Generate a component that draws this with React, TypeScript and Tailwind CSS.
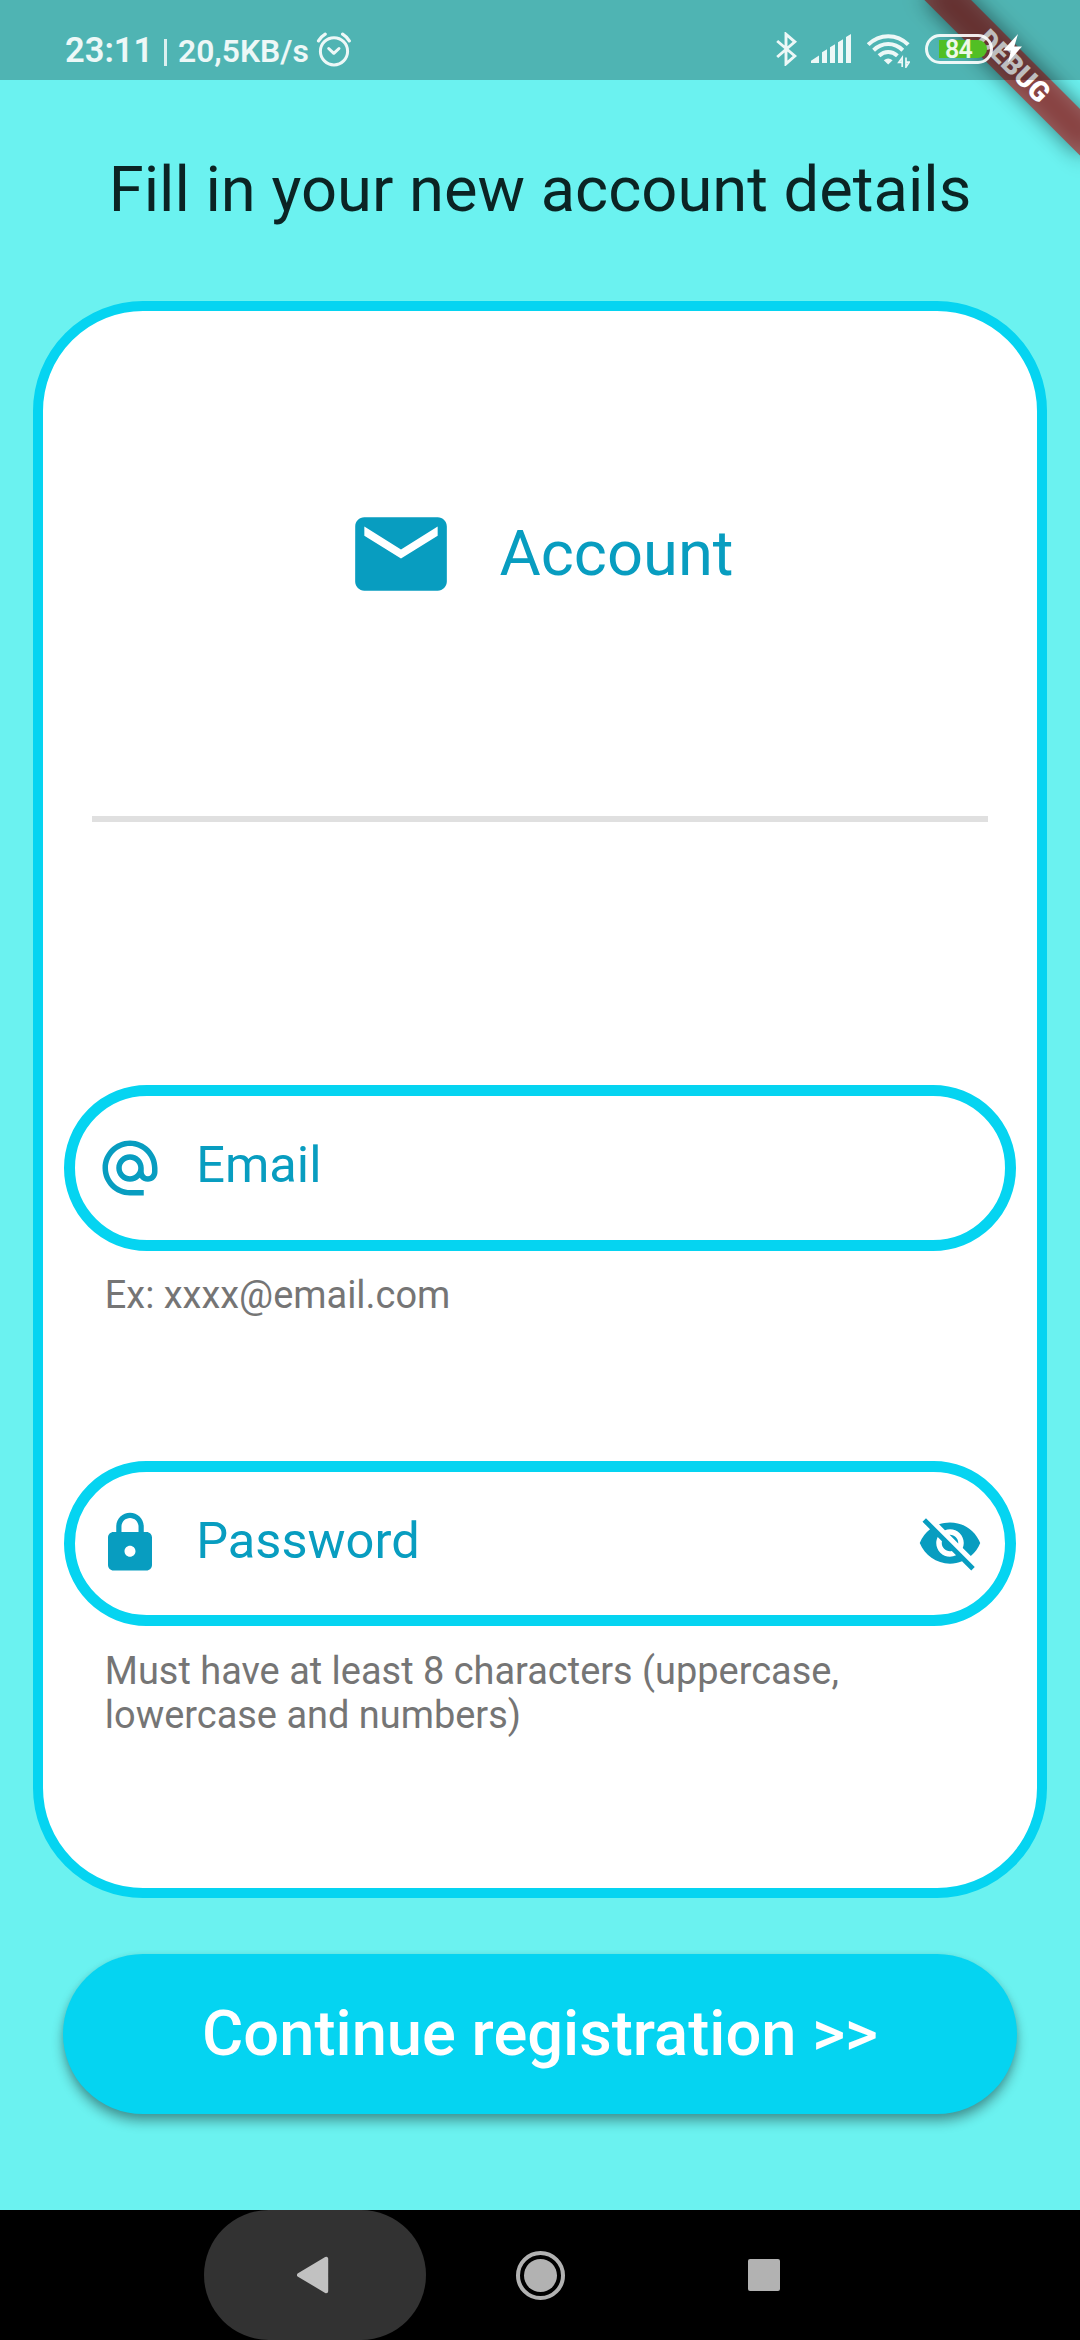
import type { ReactNode } from "react";
import {
  MdAlternateEmail,
  MdEmail,
  MdLock,
  MdVisibilityOff,
} from "react-icons/md";

function AlarmIcon() {
  return (
    <svg width="36" height="36" viewBox="0 0 36 36" fill="none" stroke="currentColor" strokeLinecap="round" strokeLinejoin="round">
      <circle cx="18" cy="19.3" r="13.6" strokeWidth="3" />
      <path d="M2.5 8.8C4.2 6 6.3 4 9.2 2.2M33.3 8.8C31.6 6 29.5 4 26.6 2.2" strokeWidth="3.2" />
      <path d="M12.7 16.5 17.8 21.3 23 16.5" strokeWidth="3" />
    </svg>
  );
}

function BluetoothIcon() {
  return (
    <svg width="22" height="34" viewBox="0 0 22 34" fill="none" stroke="currentColor" strokeWidth="2.9">
      <path d="M1.2 9 18.8 24 10 31.8V2.2L18.8 9.8 1.2 25" />
    </svg>
  );
}

function SignalIcon() {
  return (
    <svg width="40" height="29" viewBox="0 0 40 29" fill="currentColor">
      <path d="M0 29v-2.2L8 21.5V29zM11 29V18.3l5-3V29zM19 29V13.2l5-3V29zM27 29V8.2l5-3V29zM35 29V3l5-3v29z" />
    </svg>
  );
}

function WifiIcon() {
  return (
    <svg width="43" height="34" viewBox="0 0 43 34" fill="none" stroke="currentColor" strokeWidth="4">
      <path d="M1.2 10.6C12.6-.7 29.8-.7 41.2 10.6" />
      <path d="M6.6 16.2C15 8 27.4 8 35.8 16.2" />
      <path d="M12 21.8C17.6 16.7 24.8 16.7 30.4 21.8" />
      <path d="M16.8 26.2 21.2 30.6 25.6 26.2Q21.2 22.8 16.8 26.2z" fill="currentColor" stroke="none" />
      <path d="M35.2 33V23.6L31.8 28.4H35M39 23.6V33L42.2 28.2H39" strokeWidth="1.7" />
    </svg>
  );
}

function Battery() {
  return (
    <div className="flex h-[30px] w-[68px] rounded-full border-[3px] border-white/90 p-[3px]">
      <div className="ml-2 flex flex-1 items-center rounded-l-[2px] rounded-r-full bg-[#52bf24] pl-[6px] text-[25px] leading-none font-semibold tracking-[-0.8px] text-white/90">
        84
      </div>
    </div>
  );
}

function StatusBar() {
  return (
    <header className="relative z-20 flex h-20 shrink-0 items-start bg-black/[0.255] text-white/90">
      <div className="flex w-[316px] shrink-0 pt-[30px] pl-[65px] font-semibold whitespace-nowrap">
        <span className="w-[99px] shrink-0 text-[34.5px] leading-10">23:11</span>
        <span className="mt-[9px] mr-[11px] h-[27px] w-[3px] shrink-0 bg-white/80" />
        <span className="shrink-0 text-[31.8px] leading-[42px]">20,5KB/s</span>
      </div>
      <div className="mt-[31.5px]">
        <AlarmIcon />
      </div>
      <div className="mt-8 ml-[424px]">
        <BluetoothIcon />
      </div>
      <div className="mt-[34px] ml-[13px]">
        <SignalIcon />
      </div>
      <div className="mt-[33.5px] ml-4">
        <WifiIcon />
      </div>
      <div className="mt-[34px] ml-[15px]">
        <Battery />
      </div>
      <svg className="mt-[34px] ml-[9px]" width="20" height="29" viewBox="0 0 20 29" fill="white">
        <path d="M16 0 1 16.5H9L6 28.5 20 12.5H12.3z" />
      </svg>
    </header>
  );
}

/** Diagonal ribbon across the top right corner, drawn beneath the status bar. */
function DebugRibbon() {
  return (
    <div className="pointer-events-none absolute top-0 right-0 z-10 h-[260px] w-[260px] overflow-hidden">
      <div className="absolute top-0 left-[260px] h-0 w-0 origin-top-left rotate-45">
        <div className="absolute top-[77px] -left-[110px] h-[33px] w-[220px] bg-black/50 blur-[10.5px]" />
        <div className="absolute top-[77px] -left-[110px] flex h-[33px] w-[220px] items-center justify-center bg-[#b71c1c]/[0.627] text-[28px] leading-none font-black text-white">
          DEBUG
        </div>
      </div>
    </div>
  );
}

function Field({
  icon,
  label,
  helper,
  trailing,
}: {
  icon: ReactNode;
  label: string;
  helper: string;
  trailing?: ReactNode;
}) {
  return (
    <div>
      <div className="flex h-[165.5px] items-center rounded-full border-[11px] border-[#05d4f1] pr-[22px] pl-[21.9px] text-[66px] text-[#089dc0]">
        {icon}
        <span className="-mt-[5px] ml-[33px] flex-1 text-[50.6px] leading-[60px]">{label}</span>
        {trailing}
      </div>
      <p className="mt-[22.5px] pr-[100px] pl-[40.5px] text-[37.95px] leading-[44px] text-[#757575]">{helper}</p>
    </div>
  );
}

function NavigationBar() {
  return (
    <nav className="flex h-[130px] shrink-0 bg-black pl-[203.5px]">
      <div className="flex h-[130px] w-[222.5px] items-center rounded-full bg-[#323232] pl-[93.5px]">
        <svg width="32" height="38" viewBox="0 0 32 38" fill="#c1c1c1" stroke="#c1c1c1" strokeWidth="4" strokeLinejoin="round">
          <path d="M2 19 29.2 2.8V35.2z" />
        </svg>
      </div>
      <div className="flex w-[229px] items-center justify-center">
        <div className="flex h-[49px] w-[49px] items-center justify-center rounded-full border-4 border-[#b2b2b2]">
          <div className="h-[33px] w-[33px] rounded-full bg-[#b2b2b2]" />
        </div>
      </div>
      <div className="mt-[49px] ml-[93px] h-8 w-8 rounded-[2px] bg-[#b2b2b2]" />
    </nav>
  );
}

export default function App() {
  return (
    <div className="relative flex h-[2340px] w-[1080px] flex-col overflow-hidden bg-[#6bf2f0] font-[Roboto,sans-serif]">
      <DebugRibbon />
      <StatusBar />
      <main className="flex flex-1 flex-col">
        <h1 className="mt-[72px] text-center text-[63.25px] leading-[74px] whitespace-nowrap text-[#0b2424]">
          Fill in your new account details
        </h1>
        <section className="mx-[33px] mt-[75px] h-[1596.5px] rounded-[110px] border-10 border-[#05d4f1] bg-white px-[21.3px]">
          <div className="flex h-[298px] items-end justify-center gap-[43px] text-[#089dc0]">
            <MdEmail className="text-[110px]" />
            <h2 className="pb-[2px] text-[63.25px] leading-[108px]">Account</h2>
          </div>
          <div className="mx-[27.5px] mt-[207px] h-[5.5px] bg-[#e0e0e0]" />
          <div className="mt-[263.5px] flex flex-col gap-[143.5px]">
            <Field icon={<MdAlternateEmail />} label="Email" helper="Ex: xxxx@email.com" />
            <Field
              icon={<MdLock />}
              label="Password"
              helper="Must have at least 8 characters (uppercase, lowercase and numbers)"
              trailing={<MdVisibilityOff />}
            />
          </div>
        </section>
        <button className="mx-[63px] mt-[56.5px] h-40 rounded-full bg-[#05d4f1] pb-[2px] text-[63.25px] leading-[74px] font-medium text-white shadow-[0_8px_12px_rgba(0,0,0,0.32),0_2px_6px_rgba(0,0,0,0.1)]">
          Continue registration &gt;&gt;
        </button>
      </main>
      <NavigationBar />
    </div>
  );
}
